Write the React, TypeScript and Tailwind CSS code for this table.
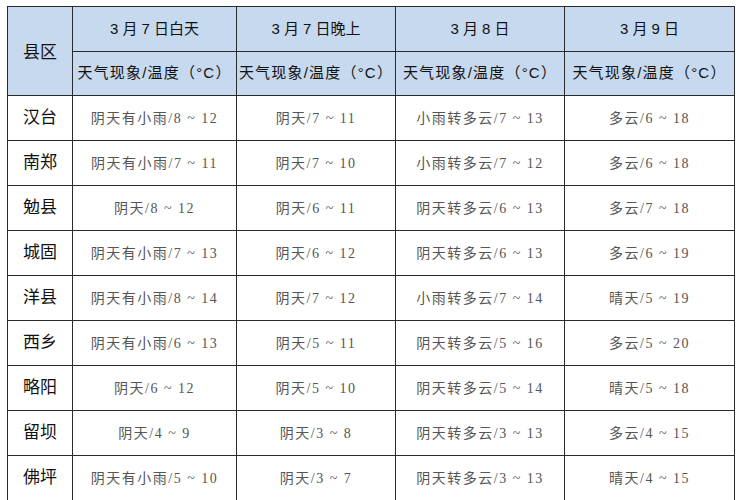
import React from 'react';

interface Row {
  county: string;
  cells: string[];
}

const rows: Row[] = [
  { county: '汉台', cells: ['阴天有小雨/8 ~ 12', '阴天/7 ~ 11', '小雨转多云/7 ~ 13', '多云/6 ~ 18'] },
  { county: '南郑', cells: ['阴天有小雨/7 ~ 11', '阴天/7 ~ 10', '小雨转多云/7 ~ 12', '多云/6 ~ 18'] },
  { county: '勉县', cells: ['阴天/8 ~ 12', '阴天/6 ~ 11', '阴天转多云/6 ~ 13', '多云/7 ~ 18'] },
  { county: '城固', cells: ['阴天有小雨/7 ~ 13', '阴天/6 ~ 12', '阴天转多云/6 ~ 13', '多云/6 ~ 19'] },
  { county: '洋县', cells: ['阴天有小雨/8 ~ 14', '阴天/7 ~ 12', '小雨转多云/7 ~ 14', '晴天/5 ~ 19'] },
  { county: '西乡', cells: ['阴天有小雨/6 ~ 13', '阴天/5 ~ 11', '阴天转多云/5 ~ 16', '多云/5 ~ 20'] },
  { county: '略阳', cells: ['阴天/6 ~ 12', '阴天/5 ~ 10', '阴天转多云/5 ~ 14', '晴天/5 ~ 18'] },
  { county: '留坝', cells: ['阴天/4 ~ 9', '阴天/3 ~ 8', '阴天转多云/3 ~ 13', '多云/4 ~ 15'] },
  { county: '佛坪', cells: ['阴天有小雨/5 ~ 10', '阴天/3 ~ 7', '阴天转多云/3 ~ 13', '晴天/4 ~ 15'] },
];

const days = ['3 月 7 日白天', '3 月 7 日晚上', '3 月 8 日', '3 月 9 日'];

const sans = "font-['Liberation_Sans','Noto_Sans_CJK_SC',sans-serif]";
const serif = "font-['Liberation_Serif','Noto_Sans_CJK_SC',serif]";

const App = () => {
  return (
    <div className="w-[740px] h-[500px] bg-white overflow-hidden pl-[7px] pt-[6px]">
      <table className="table-fixed border-collapse w-[727px]">
        <colgroup>
          <col className="w-[65px]" />
          <col className="w-[164px]" />
          <col className="w-[159px]" />
          <col className="w-[169px]" />
          <col className="w-[170px]" />
        </colgroup>
        <thead>
          <tr className="h-[45px] bg-[#c6d9ef]">
            <th rowSpan={2} className={`border border-[#2a2a2a] pt-[4px] text-[17px] font-normal text-[#111] ${sans}`}>
              县区
            </th>
            {days.map((d) => (
              <th key={d} className={`border border-[#2a2a2a] text-[15px] font-normal text-[#111] ${sans}`}>
                {d}
              </th>
            ))}
          </tr>
          <tr className="h-[44px] bg-[#c6d9ef]">
            {days.map((d) => (
              <th
                key={d}
                className={`border border-[#2a2a2a] text-[15px] tracking-[1.2px] font-normal text-[#111] whitespace-nowrap ${sans}`}
              >
                天气现象/温度（°C）
              </th>
            ))}
          </tr>
        </thead>
        <tbody>
          {rows.map((row) => (
            <tr key={row.county} className="h-[45px]">
              <td className={`border border-[#2a2a2a] text-center text-[17px] text-[#111] ${sans}`}>{row.county}</td>
              {row.cells.map((c, i) => (
                <td
                  key={i}
                  className={`border border-[#2a2a2a] text-center text-[14px] tracking-[1.5px] text-[#555] whitespace-nowrap ${serif}`}
                >
                  {c}
                </td>
              ))}
            </tr>
          ))}
        </tbody>
      </table>
    </div>
  );
};

export default App;
